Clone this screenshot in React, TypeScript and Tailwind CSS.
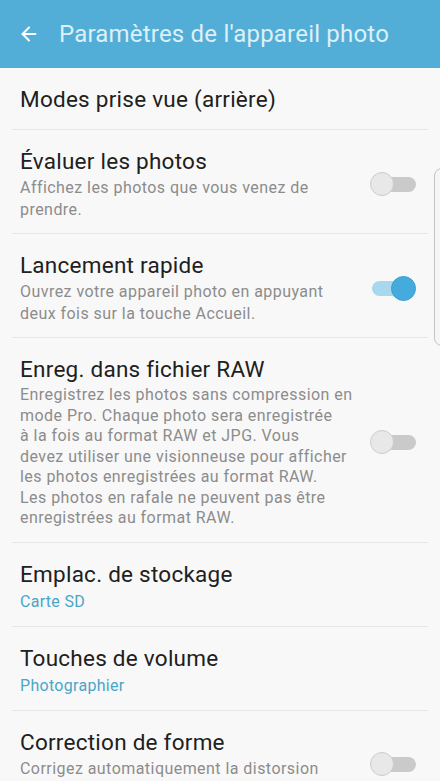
import { ArrowLeft } from 'lucide-react';

type Row = {
  title: string;
  desc?: string[];
  value?: string;
  toggle?: boolean;
  dense?: boolean;
};

const rows: Row[] = [
  { title: 'Modes prise vue (arrière)' },
  { title: 'Évaluer les photos', desc: ['Affichez les photos que vous venez de', 'prendre.'], toggle: false },
  {
    title: 'Lancement rapide',
    desc: ['Ouvrez votre appareil photo en appuyant', 'deux fois sur la touche Accueil.'],
    toggle: true,
  },
  {
    title: 'Enreg. dans fichier RAW',
    desc: [
      'Enregistrez les photos sans compression en',
      'mode Pro. Chaque photo sera enregistrée',
      'à la fois au format RAW et JPG. Vous',
      'devez utiliser une visionneuse pour afficher',
      'les photos enregistrées au format RAW.',
      'Les photos en rafale ne peuvent pas être',
      'enregistrées au format RAW.',
    ],
    toggle: false,
    dense: true,
  },
  { title: 'Emplac. de stockage', value: 'Carte SD' },
  { title: 'Touches de volume', value: 'Photographier' },
  {
    title: 'Correction de forme',
    desc: ['Corrigez automatiquement la distorsion', 'des photos prises.'],
    toggle: false,
  },
];

function Toggle({ on }: { on: boolean }) {
  if (on) {
    return (
      <div className="relative h-[24px] w-[46px] shrink-0">
        <div className="absolute left-[2px] top-[5px] h-[15px] w-[36px] rounded-full bg-[#a8d8ee]" />
        <div className="absolute right-[0px] top-0 h-[25px] w-[25px] rounded-full border border-[#3a9fd0] bg-[#45abdd]" />
      </div>
    );
  }
  return (
    <div className="relative h-[24px] w-[46px] shrink-0">
      <div className="absolute right-[0px] top-[5px] h-[15px] w-[36px] rounded-full bg-[#cacaca]" />
      <div className="absolute left-0 top-0 h-[24px] w-[24px] rounded-full border border-[#cdcdcd] bg-[#e8e8e8]" />
    </div>
  );
}

export default function App() {
  return (
    <div
      className="relative h-[781px] w-[440px] overflow-hidden bg-[#f8f8f8]"
      style={{ fontFamily: 'Roboto, "Noto Sans", sans-serif' }}
    >
      <header className="flex h-[68px] items-center bg-[#52aed6] pl-[18px]">
        <ArrowLeft className="h-[22px] w-[22px] text-white" strokeWidth={2.2} />
        <h1 className="ml-[19px] text-[24px] leading-none tracking-[0.2px] text-[#dcf0f9]">
          Paramètres de l'appareil photo
        </h1>
      </header>

      <div>
        {rows.map((row, i) => (
          <div key={row.title}>
            {i > 0 && <div className="mx-[12px] h-px bg-[#e6e6e6]" />}
            <div
              className={`flex items-center pl-[20px] pr-[24px] ${row.desc || row.value ? 'pt-[17px] pb-[13px]' : 'h-[61px]'}`}
            >
              <div className="min-w-0 flex-1">
                <div className="text-[22.5px] leading-[28px] tracking-[0.25px] text-[#202020]">{row.title}</div>
                {row.desc && (
                  <div
                    className={`mt-[2px] text-[16px] tracking-[0.45px] text-[#8c8c8c] ${row.dense ? 'leading-[20.5px]' : 'leading-[21.5px]'}`}
                  >
                    {row.desc.map((line) => (
                      <div key={line} className="whitespace-nowrap">
                        {line}
                      </div>
                    ))}
                  </div>
                )}
                {row.value && (
                  <div className="mt-[2px] text-[16px] leading-[23px] tracking-[0.3px] text-[#48a6c9]">{row.value}</div>
                )}
              </div>
              {row.toggle !== undefined && <Toggle on={row.toggle} />}
            </div>
          </div>
        ))}
      </div>

      <div className="absolute right-[-8px] top-[168px] h-[178px] w-[14px] rounded-l-[8px] border border-[#c4c4c4] bg-[#f6f6f6]" />
    </div>
  );
}
